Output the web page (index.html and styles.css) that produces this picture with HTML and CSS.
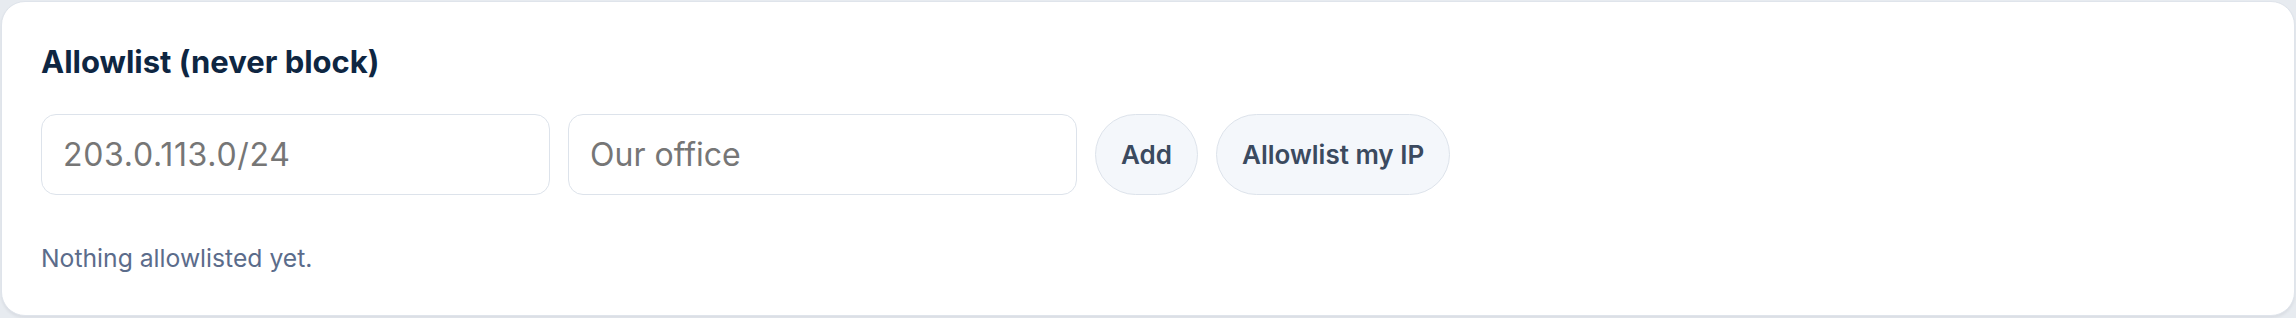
FILE: index.html
```html
<!DOCTYPE html>
<html lang="en">
<head>
<meta charset="utf-8">
<title>Allowlist</title>
<link rel="stylesheet" href="styles.css">
</head>
<body>
  <section class="card">
    <h2 class="card-title">Allowlist (never block)</h2>
    <form class="entry-row" onsubmit="return false">
      <input class="field field-ip" type="text" placeholder="203.0.113.0/24">
      <input class="field" type="text" placeholder="Our office">
      <button class="pill-btn" type="button">Add</button>
      <button class="pill-btn" type="button">Allowlist my IP</button>
    </form>
    <p class="empty-note">Nothing allowlisted yet.</p>
  </section>
</body>
</html>
```
FILE: styles.css
```css
* { box-sizing: border-box; }

html, body {
  margin: 0;
  height: 100%;
}

body {
  background: #e7ebf0;
  padding: 1px;
  font-family: Inter, "Noto Sans", sans-serif;
}

.card {
  background: #ffffff;
  border: 1px solid #dfe4eb;
  border-radius: 24px;
  padding: 41px 39px 40px;
  height: 315px;
  box-shadow: 0 2px 3px rgba(15, 23, 42, 0.06);
}

.card-title {
  margin: 0;
  font-size: 31px;
  font-weight: 700;
  line-height: 37px;
  color: #0e2642;
}

.entry-row {
  display: flex;
  align-items: stretch;
  gap: 18px;
  margin: 34px 0 0;
  height: 81px;
}

.field {
  width: 509px;
  height: 81px;
  border: 1px solid #dde3eb;
  border-radius: 15px;
  padding: 0 21px;
  font-family: Inter, "Noto Sans", sans-serif;
  font-size: 32px;
  color: #1e293b;
  background: #fff;
  outline: none;
}

.field-ip {
  letter-spacing: 0.7px;
}

.field::placeholder {
  color: #767676;
}

.pill-btn {
  height: 81px;
  padding: 0 25px;
  border: 1px solid #dde3eb;
  border-radius: 999px;
  background: #f4f7fb;
  color: #3b4a5f;
  font-family: Inter, "Noto Sans", sans-serif;
  font-size: 26px;
  font-weight: 600;
  cursor: pointer;
}

.empty-note {
  margin: 48px 0 0;
  font-size: 24.7px;
  line-height: 30px;
  color: #5b6c8b;
}
```
